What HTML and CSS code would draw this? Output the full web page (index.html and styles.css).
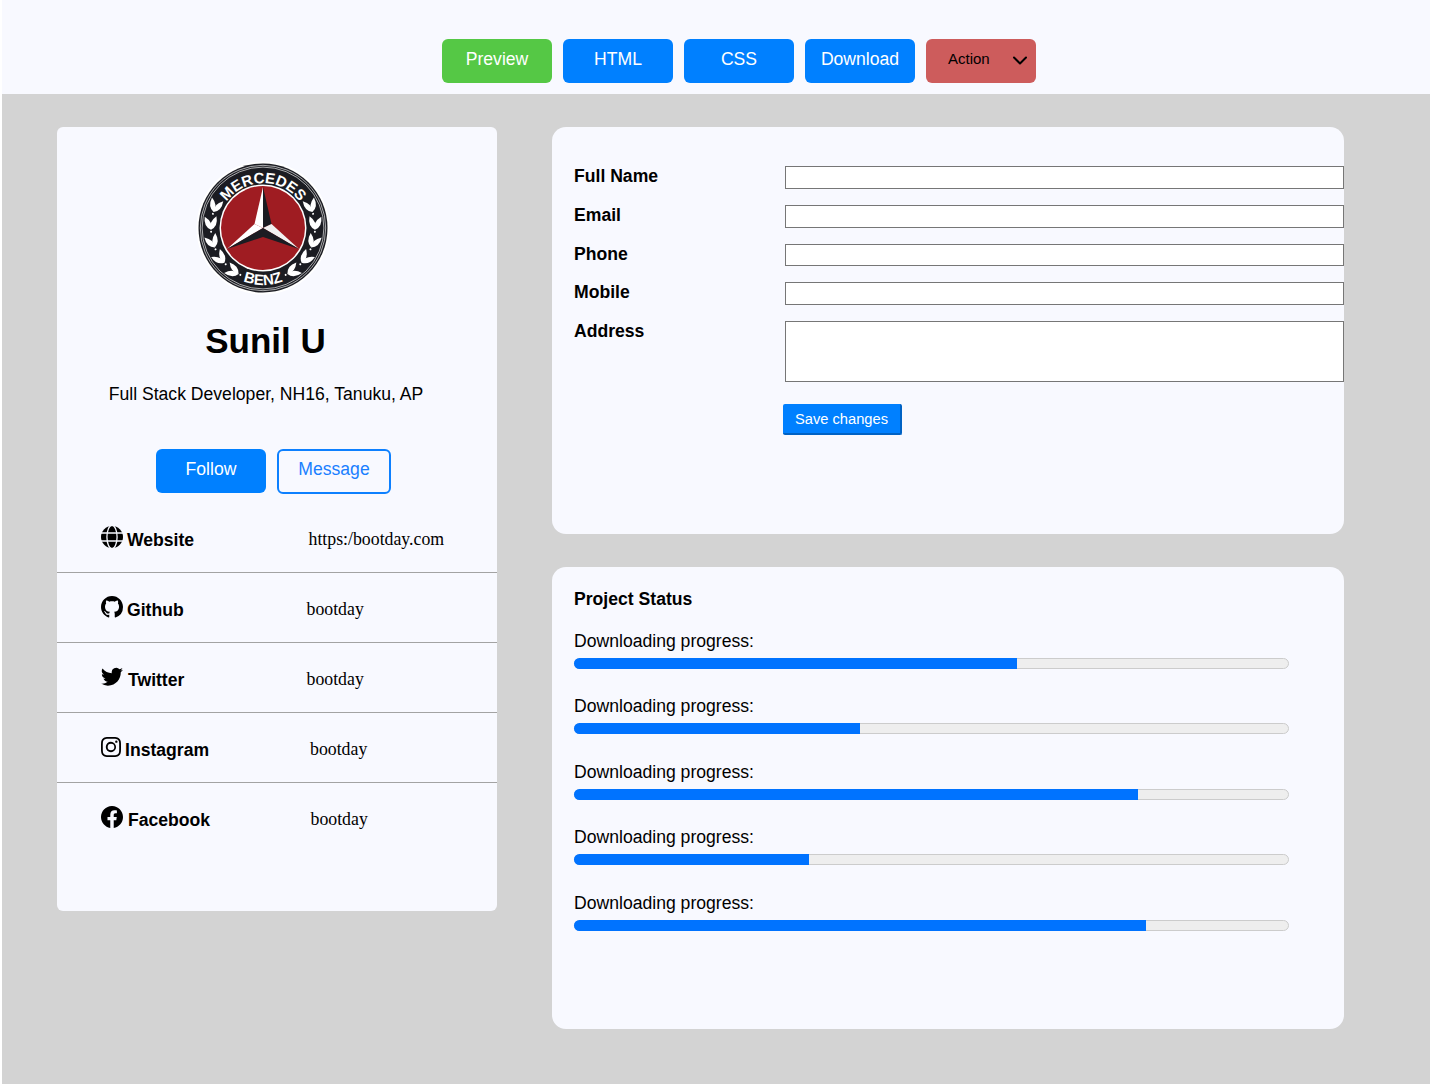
FILE: index.html
```html
<!DOCTYPE html>
<html lang="en">
<head>
<meta charset="utf-8">
<title>Profile</title>
<link rel="stylesheet" href="styles.css">
</head>
<body>
<div class="page">
  <nav class="topbar">
    <a class="tab tab-green">Preview</a>
    <a class="tab">HTML</a>
    <a class="tab">CSS</a>
    <a class="tab">Download</a>
    <a class="tab tab-action"><span>Action</span>
      <svg class="chev" viewBox="0 0 16 10" width="16" height="10"><path d="M2 1.5 8 7.5l6-6" fill="none" stroke="#000" stroke-width="2" stroke-linecap="round" stroke-linejoin="round"/></svg>
    </a>
  </nav>
  <main class="main">
    <section class="card card-profile">
      <svg class="logo" viewBox="-67 -67 134 134" width="134" height="134">
        <defs>
          <path id="arc-top" d="M-43.5 11.6A45 45 0 1 1 43.5 11.6"/>
          <path id="arc-bot" d="M-32.7 46.7A57 57 0 0 0 32.7 46.7"/>
          <path id="leaf" d="M0 0Q6-5.4 14.5 0Q6 5.4 0 0Z" fill="#fff"/>
          <g id="pair">
            <use href="#leaf" transform="translate(0 -52) rotate(24)"/>
            <use href="#leaf" transform="translate(0 -52) rotate(-24)"/>
            <circle cx="-2" cy="-52" r="1" fill="#fff"/>
          </g>
          <g id="wreath">
            <use href="#pair" transform="rotate(-152)"/>
            <use href="#pair" transform="rotate(-132)"/>
            <use href="#pair" transform="rotate(-112)"/>
            <use href="#pair" transform="rotate(-92)"/>
            <use href="#pair" transform="rotate(-72)"/>
          </g>
        </defs>
        <circle r="66.5" fill="#fff"/>
        <circle r="64.5" fill="#1b1c22"/>
        <circle r="62.7" fill="none" stroke="#e8e8e8" stroke-width=".7"/>
        <circle r="60.9" fill="none" stroke="#e8e8e8" stroke-width=".7"/>
        <use href="#wreath"/>
        <use href="#wreath" transform="scale(-1 1)"/>
        <text class="logo-text"><textPath href="#arc-top" startOffset="50%" text-anchor="middle">MERCEDES</textPath></text>
        <text class="logo-text"><textPath href="#arc-bot" startOffset="50%" text-anchor="middle">BENZ</textPath></text>
        <circle r="43.5" fill="#fff"/>
        <circle r="42" fill="#9f1c22"/>
        <path d="M0-41-8.5-4 0 0Z" fill="#fff"/>
        <path d="M0-41 8.5-4 0 0Z" fill="#1b1c22"/>
        <path d="M-36 21-8.5-4 0 0Z" fill="#fff"/>
        <path d="M-36 21 0 0 0 9Z" fill="#1b1c22"/>
        <path d="M36 21 8.5-4 0 0Z" fill="#f2f2f2"/>
        <path d="M36 21 0 0 0 9Z" fill="#1b1c22"/>
      </svg>
      <h1 class="name">Sunil U</h1>
      <p class="role">Full Stack Developer, NH16, Tanuku, AP</p>
      <div class="actions">
        <a class="btn-follow">Follow</a>
        <a class="btn-message">Message</a>
      </div>
      <ul class="links">
        <li class="link">
          <span class="link-label">
            <svg class="ic" viewBox="0 0 16 16" width="22" height="22"><circle cx="8" cy="8" r="8" fill="#000"/><g fill="none" stroke="#f8f9ff" stroke-width=".95"><ellipse cx="8" cy="8" rx="3.7" ry="8.4"/><path d="M0 5.1H16M0 10.9H16"/></g></svg>
            <b class="t-web">Website</b>
          </span>
          <span class="link-value v-web">https:/bootday.com</span>
        </li>
        <li class="link">
          <span class="link-label">
            <svg class="ic" viewBox="0 0 16 16" width="22" height="22"><path fill="#000" d="M8 0C3.58 0 0 3.58 0 8c0 3.54 2.29 6.53 5.47 7.59.4.07.55-.17.55-.38 0-.19-.01-.82-.01-1.49-2.01.37-2.53-.49-2.69-.94-.09-.23-.48-.94-.82-1.13-.28-.15-.68-.52-.01-.53.63-.01 1.08.58 1.23.82.72 1.21 1.87.87 2.33.66.07-.52.28-.87.51-1.07-1.78-.2-3.64-.89-3.64-3.95 0-.87.31-1.59.82-2.15-.08-.2-.36-1.02.08-2.12 0 0 .67-.21 2.2.82.64-.18 1.32-.27 2-.27.68 0 1.36.09 2 .27 1.53-1.04 2.2-.82 2.2-.82.44 1.1.16 1.92.08 2.12.51.56.82 1.27.82 2.15 0 3.07-1.87 3.75-3.65 3.95.29.25.54.73.54 1.48 0 1.07-.01 1.93-.01 2.2 0 .21.15.46.55.38A8.012 8.012 0 0 0 16 8c0-4.42-3.58-8-8-8z"/></svg>
            <b class="t-git">Github</b>
          </span>
          <span class="link-value v-git">bootday</span>
        </li>
        <li class="link">
          <span class="link-label">
            <svg class="ic ic-tw" viewBox="0 0 16 16" width="22" height="22"><path fill="#000" d="M5.026 15c6.038 0 9.341-5.003 9.341-9.334 0-.14 0-.282-.006-.422A6.685 6.685 0 0 0 16 3.542a6.658 6.658 0 0 1-1.889.518 3.301 3.301 0 0 0 1.447-1.817 6.533 6.533 0 0 1-2.087.793A3.286 3.286 0 0 0 7.875 6.03a9.325 9.325 0 0 1-6.767-3.429 3.289 3.289 0 0 0 1.018 4.382A3.323 3.323 0 0 1 .64 6.575v.045a3.288 3.288 0 0 0 2.632 3.218 3.203 3.203 0 0 1-.865.115 3.23 3.23 0 0 1-.614-.057 3.283 3.283 0 0 0 3.067 2.277A6.588 6.588 0 0 1 .78 13.58a6.32 6.32 0 0 1-.78-.045A9.344 9.344 0 0 0 5.026 15z"/></svg>
            <b class="t-tw">Twitter</b>
          </span>
          <span class="link-value v-tw">bootday</span>
        </li>
        <li class="link">
          <span class="link-label">
            <svg class="ic ic-ig" viewBox="0 0 16 16" width="20" height="20"><path fill="#000" d="M8 0C5.829 0 5.556.01 4.703.048 3.85.088 3.269.222 2.76.42a3.917 3.917 0 0 0-1.417.923A3.927 3.927 0 0 0 .42 2.76C.222 3.268.087 3.85.048 4.7.01 5.555 0 5.827 0 8.001c0 2.172.01 2.444.048 3.297.04.852.174 1.433.372 1.942.205.526.478.972.923 1.417.444.445.89.719 1.416.923.51.198 1.09.333 1.942.372C5.555 15.99 5.827 16 8 16s2.444-.01 3.298-.048c.851-.04 1.434-.174 1.943-.372a3.916 3.916 0 0 0 1.416-.923c.445-.445.718-.891.923-1.417.197-.509.332-1.09.372-1.942C15.99 10.445 16 10.173 16 8s-.01-2.445-.048-3.299c-.04-.851-.175-1.433-.372-1.941a3.926 3.926 0 0 0-.923-1.417A3.911 3.911 0 0 0 13.24.42c-.51-.198-1.092-.333-1.943-.372C10.443.01 10.172 0 7.998 0h.003zm-.717 1.442h.718c2.136 0 2.389.007 3.232.046.78.035 1.204.166 1.486.275.373.145.64.319.92.599.28.28.453.546.598.92.11.281.24.705.275 1.485.039.843.047 1.096.047 3.231s-.008 2.389-.047 3.232c-.035.78-.166 1.203-.275 1.485a2.47 2.47 0 0 1-.599.919c-.28.28-.546.453-.92.598-.28.11-.704.24-1.485.276-.843.038-1.096.047-3.232.047s-2.39-.009-3.233-.047c-.78-.036-1.203-.166-1.485-.276a2.478 2.478 0 0 1-.92-.598 2.48 2.48 0 0 1-.6-.92c-.109-.281-.24-.705-.275-1.485-.038-.843-.046-1.096-.046-3.233 0-2.136.008-2.388.046-3.231.036-.78.166-1.204.276-1.486.145-.373.319-.64.599-.92.28-.28.546-.453.92-.598.282-.11.705-.24 1.485-.276.738-.034 1.024-.044 2.515-.045v.002zm4.988 1.328a.96.96 0 1 0 0 1.92.96.96 0 0 0 0-1.92zm-4.27 1.122a4.109 4.109 0 1 0 0 8.217 4.109 4.109 0 0 0 0-8.217zm0 1.441a2.667 2.667 0 1 1 0 5.334 2.667 2.667 0 0 1 0-5.334z"/></svg>
            <b class="t-ig">Instagram</b>
          </span>
          <span class="link-value v-ig">bootday</span>
        </li>
        <li class="link">
          <span class="link-label">
            <svg class="ic" viewBox="0 0 16 16" width="22" height="22"><path fill="#000" d="M16 8.049c0-4.446-3.582-8.05-8-8.05C3.58 0-.002 3.603-.002 8.05c0 4.017 2.926 7.347 6.75 7.951v-5.625h-2.03V8.05H6.75V6.275c0-2.017 1.195-3.131 3.022-3.131.876 0 1.791.157 1.791.157v1.98h-1.009c-.993 0-1.303.621-1.303 1.258v1.51h2.218l-.354 2.326H9.25V16c3.824-.604 6.75-3.934 6.75-7.951z"/></svg>
            <b class="t-fb">Facebook</b>
          </span>
          <span class="link-value v-fb">bootday</span>
        </li>
      </ul>
    </section>
    <div class="col-right">
      <section class="card card-form">
        <form class="form">
          <label class="f-label">Full Name</label><input class="f-input" type="text">
          <label class="f-label">Email</label><input class="f-input" type="text">
          <label class="f-label">Phone</label><input class="f-input" type="text">
          <label class="f-label">Mobile</label><input class="f-input" type="text">
          <label class="f-label">Address</label><textarea class="f-area"></textarea>
        </form>
        <a class="btn-save">Save changes</a>
      </section>
      <section class="card card-status">
        <h2 class="status-title">Project Status</h2>
        <div class="prog"><p class="prog-label">Downloading progress:</p><div class="track"><div class="fill" style="width:62.13%"></div></div></div>
        <div class="prog"><p class="prog-label">Downloading progress:</p><div class="track"><div class="fill" style="width:40.11%"></div></div></div>
        <div class="prog"><p class="prog-label">Downloading progress:</p><div class="track"><div class="fill" style="width:79.1%"></div></div></div>
        <div class="prog"><p class="prog-label">Downloading progress:</p><div class="track"><div class="fill" style="width:32.96%"></div></div></div>
        <div class="prog"><p class="prog-label">Downloading progress:</p><div class="track"><div class="fill" style="width:80.2%"></div></div></div>
      </section>
    </div>
  </main>
</div>
</body>
</html>
```
FILE: styles.css
```css
* { box-sizing: border-box; }
html { background: #fff; }
body { margin: 0 0 0 2px; font-family: "Liberation Sans", Arial, sans-serif; color: #000; font-size: 17.6px; overflow: hidden; height: 1084px; }
.page { width: 1428px; height: 1084px; display: flex; flex-direction: column; }

.topbar { height: 94px; flex: none; background: #f8f9ff; display: flex; justify-content: center; gap: 11px; padding: 39px 0 0 46px; }
.tab { width: 110px; height: 44px; border-radius: 6px; background: #0080ff; color: #fff; display: flex; align-items: center; justify-content: center; font-size: 17.6px; padding-bottom: 3px; }
.tab-green { background: #55c845; }
.tab-action { background: #cd5c5c; color: #000; font-size: 15px; justify-content: space-between; padding: 0 8px 5px 22px; }
.chev { margin-top: 5px; }

.main { flex: 1; background: #d3d3d3; display: flex; align-items: flex-start; padding: 33px 0 0 55px; gap: 55px; }
.card { background: #f8f9ff; }
.card-profile { width: 440px; height: 784px; border-radius: 6px; display: flex; flex-direction: column; }
.logo { display: block; margin: 34px 0 0 139px; }
.logo-text { font: bold 15px "Liberation Sans", Arial, sans-serif; fill: #fff; }
.name { margin: 26px 23px 0 0; text-align: center; font-size: 35px; line-height: 40px; font-weight: bold; }
.role { margin: 23px 22px 0 0; text-align: center; font-size: 17.6px; line-height: 21px; }
.actions { display: flex; gap: 11px; margin: 44px 0 0 99px; }
.btn-follow { width: 110px; height: 44px; border-radius: 6px; background: #0080ff; color: #fff; display: flex; align-items: center; justify-content: center; padding-bottom: 3px; }
.btn-message { width: 114px; height: 45px; border-radius: 6px; border: 2px solid #0d80ff; color: #1a7fff; display: flex; align-items: center; justify-content: center; padding-bottom: 4px; }

.links { list-style: none; margin: 9px 0 0; padding: 0; }
.link { height: 70px; padding: 23px 0 0 44px; display: flex; align-items: flex-start; border-bottom: 1px solid #a3a3a3; }
.link:last-child { border-bottom: 0; }
.link-label { width: 207px; display: flex; align-items: flex-start; flex: none; }
.link-label b { font-size: 17.6px; line-height: 21px; margin-top: 4px; }
.ic { flex: none; margin-top: 0; }
.ic-tw { margin-top: -1px; }
.ic-ig { margin-top: 1px; }
.t-web { margin-left: 4px; }
.t-git { margin-left: 4px; }
.t-tw { margin-left: 5px; }
.t-ig { margin-left: 4px; }
.t-fb { margin-left: 5px; }
.link-value { font-family: "Liberation Serif", "Times New Roman", serif; font-size: 17.8px; line-height: 21px; margin-top: 3px; }
.v-web { margin-left: .5px; }
.v-git { margin-left: -1.5px; }
.v-tw { margin-left: -1.5px; }
.v-ig { margin-left: 2px; }
.v-fb { margin-left: 2.5px; }

.col-right { width: 792px; display: flex; flex-direction: column; gap: 33px; }
.card-form { height: 407px; border-radius: 14px; padding: 39.4px 0 0 22px; }
.form { display: grid; grid-template-columns: 211px 559px; row-gap: 16px; }
.f-label { font-weight: bold; font-size: 17.6px; line-height: 21px; }
.f-input { height: 22.67px; border: 1px solid #767676; background: #fff; border-radius: 0; padding: 0; margin: 0; display: block; width: 559px; }
.f-area { height: 61px; border: 1px solid #767676; background: #fff; padding: 0; margin: 0; display: block; width: 559px; resize: none; }
.btn-save { display: flex; width: 119px; height: 31px; margin: 22px 0 0 209px; background: #0080ff; color: #fff; font-size: 14.7px; align-items: center; justify-content: center; border-right: 2px solid #0062c4; border-bottom: 2px solid #0062c4; border-radius: 2px; }

.card-status { height: 462px; border-radius: 14px; padding: 22px 0 0 22px; }
.status-title { margin: 0 0 19.6px; font-size: 17.6px; line-height: 21px; font-weight: bold; }
.prog { height: 65.5px; }
.prog-label { margin: 0; font-size: 17.6px; line-height: 21px; padding-top: 1px; }
.track { width: 715px; height: 11px; margin-top: 6px; background: #eee; border: 1px solid #ccc; border-radius: 6px; }
.fill { height: 11px; margin: -1px 0 0 -1px; background: #0073ff; border-radius: 6px 0 0 6px; }
```
